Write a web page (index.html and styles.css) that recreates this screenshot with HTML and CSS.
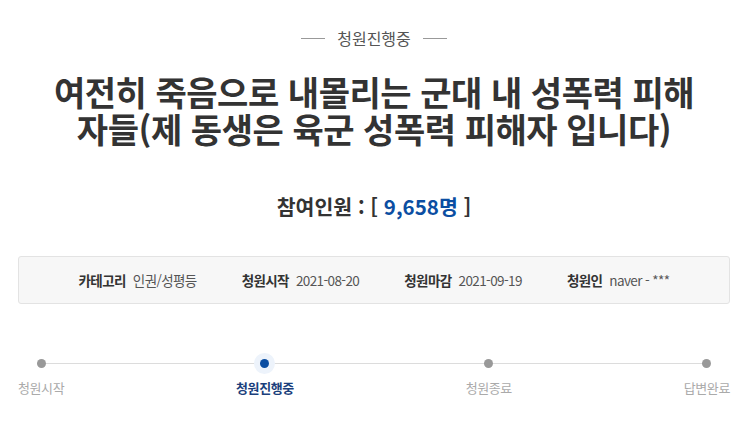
FILE: index.html
```html
<!DOCTYPE html>
<html lang="ko">
<head>
<meta charset="utf-8">
<link rel="stylesheet" href="styles.css">
</head>
<body>
<div class="page">
  <div class="status"><span class="dash"></span><span class="status-text">청원진행중</span><span class="dash"></span></div>
  <h1 class="title">여전히 죽음으로 내몰리는 군대 내 성폭력 피해자들(제 동생은 육군 성폭력 피해자 입니다)</h1>
  <div class="count">참여인원 : [ <span class="num">9,658명</span> ]</div>
  <ul class="info">
    <li><b>카테고리</b><span>인권/성평등</span></li>
    <li><b>청원시작</b><span>2021-08-20</span></li>
    <li><b>청원마감</b><span>2021-09-19</span></li>
    <li><b>청원인</b><span>naver - ***</span></li>
  </ul>
  <div class="timeline">
    <div class="track"></div>
    <div class="step"><i class="dot"></i><span>청원시작</span></div>
    <div class="step active"><i class="dot"></i><span>청원진행중</span></div>
    <div class="step"><i class="dot"></i><span>청원종료</span></div>
    <div class="step"><i class="dot"></i><span>답변완료</span></div>
  </div>
</div>
</body>
</html>
```
FILE: styles.css
```css
* { box-sizing: border-box; }
html, body { margin: 0; padding: 0; background: #fff; }
body {
  font-family: "Noto Sans CJK KR", "Noto Sans", sans-serif;
  color: #333;
  width: 745px;
}
.page { padding: 26px 15px 0 18px; }
.status {
  display: flex;
  justify-content: center;
  align-items: center;
  gap: 12px;
  height: 24px;
}
.dash { width: 24px; height: 1px; background: #999; }
.status-text { font-size: 16px; color: #555; line-height: 24px; }
.title {
  margin: 23px auto 0;
  width: 655px;
  font-size: 34px;
  font-weight: 700;
  line-height: 37px;
  text-align: center;
  color: #333;
  letter-spacing: -0.45px;
}
.count {
  margin-top: 46px;
  text-align: center;
  font-size: 20.5px;
  font-weight: 700;
  line-height: 26px;
  color: #333;
}
.count .num { color: #0b4ea2; }
.info {
  list-style: none;
  margin: 37px 0 0;
  padding: 0;
  height: 48px;
  display: flex;
  justify-content: center;
  align-items: center;
  gap: 45px;
  background: #f7f7f7;
  border: 1px solid #e3e3e3;
  border-radius: 3px;
  font-size: 13.5px;
  letter-spacing: -0.6px;
}
.info li { display: flex; gap: 7px; align-items: center; }
.info b { font-weight: 700; color: #333; }
.info span { color: #555; }
.timeline {
  position: relative;
  margin-top: 54px;
  display: flex;
  justify-content: space-between;
  padding: 0;
}
.track {
  position: absolute;
  left: 23px;
  right: 23px;
  top: 5px;
  height: 1px;
  background: #dcdcdc;
}
.step {
  position: relative;
  display: flex;
  flex-direction: column;
  align-items: center;
  gap: 11px;
  font-size: 13px;
  color: #aaa;
  line-height: 18px;
  letter-spacing: -0.4px;
}
.dot {
  display: block;
  width: 9px;
  height: 9px;
  margin-top: 1px;
  border-radius: 50%;
  background: #999;
}
.step.active { color: #1b3f7c; font-weight: 700; }
.step.active .dot {
  background: #0b4ea2;
  box-shadow: 0 0 0 6px #edf3fb;
}
```
